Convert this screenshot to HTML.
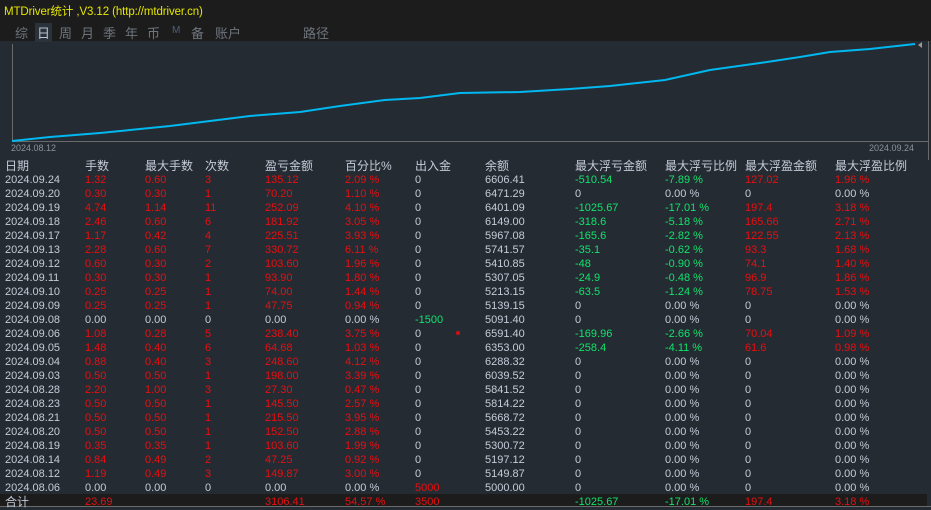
<!DOCTYPE html><html><head><meta charset="utf-8"><style>
body{margin:0;width:931px;height:510px;background:#252b33;overflow:hidden;font-family:"Liberation Sans","Noto Sans CJK SC",sans-serif;position:relative}
.top{position:absolute;left:0;top:0;width:931px;height:41px;background:#1c1c1c}
.title{position:absolute;left:4px;top:3px;color:#e6e600;font-size:11.5px;letter-spacing:-0.1px}
.t{position:absolute;top:23px;font-size:13px;color:#6e757e}
.sel{background:#2a323c;color:#b8c4d4;padding:0 2px;margin-left:-2px}
.c{position:absolute;font-size:11px;line-height:14px;color:#c3ccd8;white-space:nowrap}
.r{color:#e80f0f}.g{color:#11e36a}
.tot{position:absolute;left:0;top:494px;width:927px;height:13px;background:#1c1c1c}
</style></head><body>
<div class="top"></div>
<div class="title">MTDriver统计 ,V3.12 (http://mtdriver.cn)</div>
<div class="t" style="left:15px">综</div><div class="t sel" style="left:37px">日</div><div class="t" style="left:59px">周</div><div class="t" style="left:81px">月</div><div class="t" style="left:103px">季</div><div class="t" style="left:125px">年</div><div class="t" style="left:147px">币</div><div class="t" style="left:172px;font-size:10px;top:25px;color:#50607a">M</div><div class="t" style="left:191px">备</div><div class="t" style="left:215px">账户</div><div class="t" style="left:303px">路径</div>
<svg style="position:absolute;left:0;top:0" width="931" height="160">
<line x1="12.5" y1="44" x2="12.5" y2="141" stroke="#6a6a6a"/>
<line x1="12" y1="141.5" x2="928" y2="141.5" stroke="#6a6a6a"/>
<line x1="928.5" y1="41" x2="928.5" y2="510" stroke="#6a6a6a"/>
<polygon points="922,42 918,45 922,48" fill="#999"/>
<polyline fill="none" stroke="#00b8f0" stroke-width="2" points="12,141 50,137 75,135 100,133 130,130 170,126 210,121 250,116 300,112 340,106 385,100 420,98 460,93 520,92 570,89 610,86 665,80 710,70 760,63 800,57 830,52 870,49 915,44"/>
<text x="11" y="151" fill="#8c939c" font-size="9" font-family="Liberation Sans">2024.08.12</text>
<text x="869" y="151" fill="#8c939c" font-size="9" font-family="Liberation Sans">2024.09.24</text>
</svg>
<div class="tot"></div>
<div style="position:absolute;left:0;top:506px;width:931px;height:1px;background:#6a6a6a"></div>
<div id="t"></div>
<script>
const X=[5,85,145,205,265,345,415,485,575,665,745,835];
const H=["日期","手数","最大手数","次数","盈亏金额","百分比%","出入金","余额","最大浮亏金额","最大浮亏比例","最大浮盈金额","最大浮盈比例"];
const R=`2024.09.24|1.32|0.60|3|135.12|2.09 %|0|6606.41|-510.54|-7.89 %|127.02|1.96 %
2024.09.20|0.30|0.30|1|70.20|1.10 %|0|6471.29|0|0.00 %|0|0.00 %
2024.09.19|4.74|1.14|11|252.09|4.10 %|0|6401.09|-1025.67|-17.01 %|197.4|3.18 %
2024.09.18|2.46|0.60|6|181.92|3.05 %|0|6149.00|-318.6|-5.18 %|165.66|2.71 %
2024.09.17|1.17|0.42|4|225.51|3.93 %|0|5967.08|-165.6|-2.82 %|122.55|2.13 %
2024.09.13|2.28|0.60|7|330.72|6.11 %|0|5741.57|-35.1|-0.62 %|93.3|1.68 %
2024.09.12|0.60|0.30|2|103.60|1.96 %|0|5410.85|-48|-0.90 %|74.1|1.40 %
2024.09.11|0.30|0.30|1|93.90|1.80 %|0|5307.05|-24.9|-0.48 %|96.9|1.86 %
2024.09.10|0.25|0.25|1|74.00|1.44 %|0|5213.15|-63.5|-1.24 %|78.75|1.53 %
2024.09.09|0.25|0.25|1|47.75|0.94 %|0|5139.15|0|0.00 %|0|0.00 %
2024.09.08|0.00|0.00|0|0.00|0.00 %|-1500|5091.40|0|0.00 %|0|0.00 %
2024.09.06|1.08|0.28|5|238.40|3.75 %|0|6591.40|-169.96|-2.66 %|70.04|1.09 %
2024.09.05|1.48|0.40|6|64.68|1.03 %|0|6353.00|-258.4|-4.11 %|61.6|0.98 %
2024.09.04|0.88|0.40|3|248.60|4.12 %|0|6288.32|0|0.00 %|0|0.00 %
2024.09.03|0.50|0.50|1|198.00|3.39 %|0|6039.52|0|0.00 %|0|0.00 %
2024.08.28|2.20|1.00|3|27.30|0.47 %|0|5841.52|0|0.00 %|0|0.00 %
2024.08.23|0.50|0.50|1|145.50|2.57 %|0|5814.22|0|0.00 %|0|0.00 %
2024.08.21|0.50|0.50|1|215.50|3.95 %|0|5668.72|0|0.00 %|0|0.00 %
2024.08.20|0.50|0.50|1|152.50|2.88 %|0|5453.22|0|0.00 %|0|0.00 %
2024.08.19|0.35|0.35|1|103.60|1.99 %|0|5300.72|0|0.00 %|0|0.00 %
2024.08.14|0.84|0.49|2|47.25|0.92 %|0|5197.12|0|0.00 %|0|0.00 %
2024.08.12|1.19|0.49|3|149.87|3.00 %|0|5149.87|0|0.00 %|0|0.00 %
2024.08.06|0.00|0.00|0|0.00|0.00 %|5000|5000.00|0|0.00 %|0|0.00 %`.split("\n");
let h="";
H.forEach((s,i)=>h+=`<div class="c" style="left:${X[i]}px;top:158px;font-size:12px;line-height:16px">${s}</div>`);
R.forEach((line,j)=>{const c=line.split("|");const y=173+j*14;
c.forEach((s,i)=>{let cl="";
if(i>=1&&i<=5&&s!="0.00"&&s!="0"&&s!="0.00 %")cl="r";
if(i==6){if(s.startsWith("-"))cl="g";else if(s!="0")cl="r";}
if((i==8||i==9)&&s.startsWith("-"))cl="g";
if((i==10||i==11)&&s!="0"&&s!="0.00 %")cl="r";
h+=`<div class="c ${cl}" style="left:${X[i]}px;top:${y}px">${s}</div>`;});});
const T=["合计","23.69","","","3106.41","54.57 %","3500","","-1025.67","-17.01 %","197.4","3.18 %"];
T.forEach((s,i)=>{let cl=i==0?"":(i>=8&&i<=9?"g":"r");h+=`<div class="c ${cl}" style="left:${X[i]}px;top:495px;${i==0?'font-size:12px':''}">${s}</div>`});
h+=`<div style="position:absolute;left:456px;top:331px;width:4px;height:4px;border-radius:2px;background:#d01010"></div>`;
document.getElementById("t").innerHTML=h;
</script>
</body></html>
